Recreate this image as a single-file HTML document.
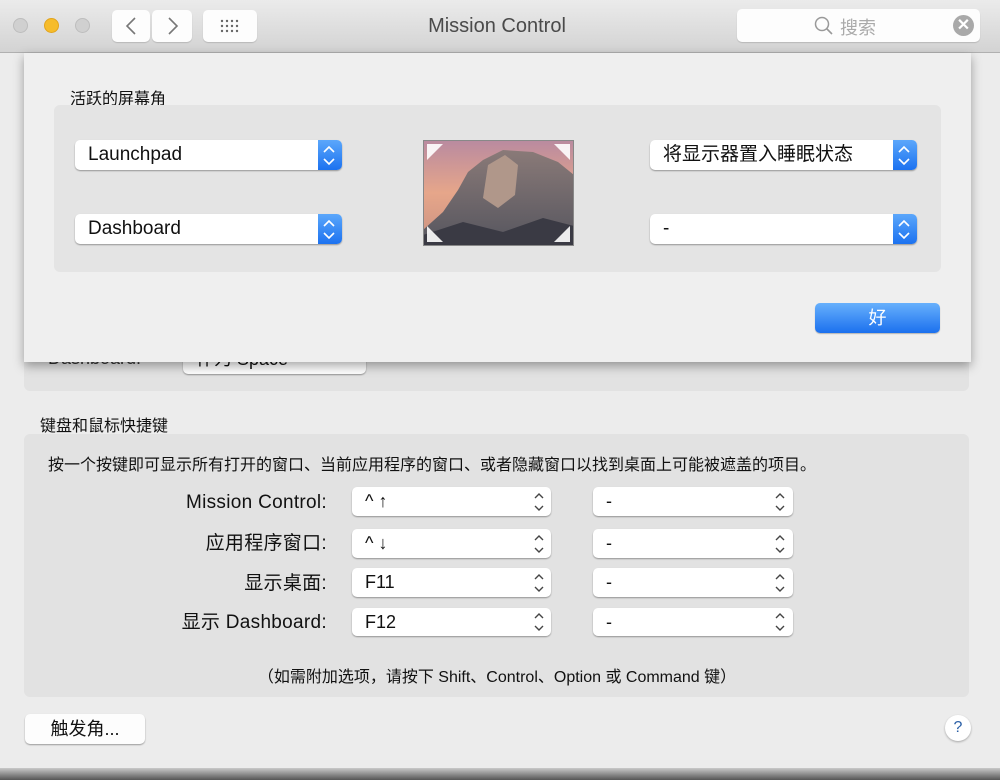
<!DOCTYPE html>
<html><head><meta charset="utf-8"><style>
*{margin:0;padding:0;box-sizing:border-box}
body{width:1000px;height:780px;overflow:hidden;background:#ececec;font-family:"Liberation Sans","Noto Sans CJK SC",sans-serif;color:#111;position:relative}
.a{position:absolute}
.tb{left:0;top:0;width:1000px;height:53px;background:linear-gradient(#ebebeb,#d3d3d3);border-bottom:1px solid #b0b0b0}
.dot{width:15px;height:15px;border-radius:50%;top:18px;background:#d0d0d0;border:1px solid #bdbdbd}
.btn{background:#fdfdfd;border-radius:5px;box-shadow:0 1px 1px rgba(0,0,0,.15)}
.grp{background:#e2e2e2;border-radius:6px}
.pop{background:#fff;border-radius:5px;box-shadow:0 1px 1.5px rgba(0,0,0,.35);font-size:19px;padding-left:13px;line-height:30px}
.pop .st{position:absolute;right:0;top:0;width:24px;height:100%;background:linear-gradient(#5ba7fb,#1c72f0);border-radius:0 5px 5px 0}
.p2{background:#fff;border-radius:5px;box-shadow:0 1px 1.5px rgba(0,0,0,.35);font-size:18px;padding-left:13px;line-height:29px}
.lbl{font-size:19px;text-align:right;width:310px;left:17px;line-height:22px;height:22px;letter-spacing:.3px}
</style></head><body>
<div class="a tb"></div>
<div class="a dot" style="left:13px"></div>
<div class="a dot" style="left:44px;background:#f6bc2b;border-color:#e2a41d"></div>
<div class="a dot" style="left:75px"></div>
<div class="a btn" style="left:112px;top:10px;width:38px;height:32px"></div>
<div class="a btn" style="left:152px;top:10px;width:40px;height:32px"></div>
<svg class="a" style="left:112px;top:10px" width="80" height="32"><path d="M23 8 L15 16 L23 24 M57 8 L65 16 L57 24" stroke="#777" stroke-width="1.6" fill="none"/></svg>
<div class="a btn" style="left:203px;top:10px;width:54px;height:32px"></div>
<svg class="a" style="left:220px;top:18px" width="24" height="20"><g fill="#666"><circle cx="2" cy="3" r="1.2"/><circle cx="7" cy="3" r="1.2"/><circle cx="12" cy="3" r="1.2"/><circle cx="17" cy="3" r="1.2"/><circle cx="2" cy="8" r="1.2"/><circle cx="7" cy="8" r="1.2"/><circle cx="12" cy="8" r="1.2"/><circle cx="17" cy="8" r="1.2"/><circle cx="2" cy="13" r="1.2"/><circle cx="7" cy="13" r="1.2"/><circle cx="12" cy="13" r="1.2"/><circle cx="17" cy="13" r="1.2"/></g></svg>
<div class="a" style="left:397px;top:15px;width:200px;text-align:center;font-size:20px;color:#4a4a4a">Mission Control</div>
<div class="a btn" style="left:737px;top:9px;width:243px;height:33px"></div>
<svg class="a" style="left:813px;top:15px" width="22" height="22"><circle cx="9" cy="9" r="6.5" stroke="#999" stroke-width="1.5" fill="none"/><path d="M14 14 L19 19" stroke="#999" stroke-width="1.6"/></svg>
<div class="a" style="left:840px;top:14px;font-size:18px;color:#aaa">搜索</div>
<div class="a" style="left:953px;top:15px;width:21px;height:21px;border-radius:50%;background:#a9a9a9;color:#fff;font-size:16px;font-weight:bold;text-align:center;line-height:21px">✕</div>

<div class="a grp" style="left:24px;top:290px;width:945px;height:101px"></div>
<div class="a" style="left:48px;top:348px;font-size:18px;color:#333">Dashboard:</div>
<div class="a p2" style="left:183px;top:345px;width:183px;height:29px">作为 Space</div>
<div class="a" style="left:40px;top:412px;font-size:16px">键盘和鼠标快捷键</div>
<div class="a grp" style="left:24px;top:434px;width:945px;height:263px"></div>
<div class="a" style="left:48px;top:451px;font-size:16px;white-space:nowrap">按一个按键即可显示所有打开的窗口、当前应用程序的窗口、或者隐藏窗口以找到桌面上可能被遮盖的项目。</div>
<div class="a lbl" style="top:492px">Mission Control:</div>
<div class="a lbl" style="top:533px">应用程序窗口:</div>
<div class="a lbl" style="top:573px">显示桌面:</div>
<div class="a lbl" style="top:612px">显示 Dashboard:</div>
<div class="a p2" style="left:352px;top:487px;width:199px;height:29px">^ ↑</div>
<div class="a p2" style="left:352px;top:529px;width:199px;height:29px">^ ↓</div>
<div class="a p2" style="left:352px;top:568px;width:199px;height:29px">F11</div>
<div class="a p2" style="left:352px;top:608px;width:199px;height:28px">F12</div>
<div class="a p2" style="left:593px;top:487px;width:200px;height:29px">-</div>
<div class="a p2" style="left:593px;top:529px;width:200px;height:29px">-</div>
<div class="a p2" style="left:593px;top:568px;width:200px;height:29px">-</div>
<div class="a p2" style="left:593px;top:608px;width:200px;height:28px">-</div>
<svg class="a" style="left:0;top:0" width="1000" height="780"><g stroke="#444" stroke-width="1.4" fill="none">
<path d="M535 498l4-4 4 4M535 506l4 4 4-4M776 498l4-4 4 4M776 506l4 4 4-4"/>
<path d="M535 540l4-4 4 4M535 548l4 4 4-4M776 540l4-4 4 4M776 548l4 4 4-4"/>
<path d="M535 579l4-4 4 4M535 587l4 4 4-4M776 579l4-4 4 4M776 587l4 4 4-4"/>
<path d="M535 618l4-4 4 4M535 626l4 4 4-4M776 618l4-4 4 4M776 626l4 4 4-4"/>
</g></svg>
<div class="a" style="left:0;top:663px;width:994px;text-align:center;font-size:16px">（如需附加选项，请按下 Shift、Control、Option 或 Command 键）</div>
<div class="a btn" style="left:25px;top:714px;width:120px;height:30px;font-size:18px;line-height:30px;text-align:center;box-shadow:0 1px 1.5px rgba(0,0,0,.35)">触发角...</div>
<div class="a" style="left:945px;top:715px;width:26px;height:26px;border-radius:50%;background:#fff;box-shadow:0 1px 2px rgba(0,0,0,.3);text-align:center;font-size:16px;line-height:26px;color:#2a5fa6">?</div>
<div class="a" style="left:0;top:768px;width:1000px;height:12px;background:linear-gradient(#c9c9c9,#555)"></div>

<div class="a" style="left:24px;top:53px;width:947px;height:309px;background:#efefef;box-shadow:0 4px 10px rgba(0,0,0,.35)"></div>
<div class="a" style="left:70px;top:85px;font-size:16px">活跃的屏幕角</div>
<div class="a grp" style="left:54px;top:105px;width:887px;height:167px;background:#e4e4e4"></div>
<div class="a pop" style="left:75px;top:140px;width:267px;height:30px">Launchpad<div class="st"></div></div>
<div class="a pop" style="left:75px;top:214px;width:267px;height:30px">Dashboard<div class="st"></div></div>
<div class="a pop" style="left:650px;top:140px;width:267px;height:30px">将显示器置入睡眠状态<div class="st"></div></div>
<div class="a pop" style="left:650px;top:214px;width:267px;height:30px">-<div class="st"></div></div>
<svg class="a" style="left:0;top:0" width="1000" height="300"><g stroke="#fff" stroke-width="1.6" fill="none">
<path d="M324 152l5-5 5 5M324 159l5 5 5-5M324 226l5-5 5 5M324 233l5 5 5-5M899 152l5-5 5 5M899 159l5 5 5-5M899 226l5-5 5 5M899 233l5 5 5-5"/></g></svg>
<svg class="a" style="left:423px;top:140px" width="151" height="106">
<defs><linearGradient id="sk" x1="0" y1="0" x2="0" y2="1"><stop offset="0" stop-color="#b98aa0"/><stop offset=".5" stop-color="#e6a68a"/><stop offset="1" stop-color="#c89080"/></linearGradient>
<linearGradient id="rk" x1="0" y1="0" x2="0" y2="1"><stop offset="0" stop-color="#8a7a78"/><stop offset="1" stop-color="#55555e"/></linearGradient></defs>
<rect width="151" height="106" fill="url(#sk)"/>
<path d="M0 106 L0 90 L20 72 L35 50 L45 32 L60 20 L80 10 L110 12 L135 22 L151 35 L151 106Z" fill="url(#rk)"/>
<path d="M65 25 L82 15 L95 25 L92 55 L75 68 L60 58Z" fill="#b0978a"/>
<path d="M0 95 L40 82 L80 92 L120 78 L151 86 L151 106 L0 106Z" fill="#3a3a44"/>
<g fill="#fff" opacity=".9"><path d="M4 4h16L4 20Z"/><path d="M147 4h-16l16 16Z"/><path d="M4 102h16L4 86Z"/><path d="M147 102h-16l16-16Z"/></g>
<rect x=".5" y=".5" width="150" height="105" fill="none" stroke="#888"/>
</svg>
<div class="a" style="left:815px;top:303px;width:125px;height:30px;border-radius:5px;background:linear-gradient(#67b0fc,#1b70ee);color:#fff;font-size:18px;text-align:center;line-height:30px;box-shadow:0 1px 1px rgba(0,0,0,.25)">好</div>
</body></html>
